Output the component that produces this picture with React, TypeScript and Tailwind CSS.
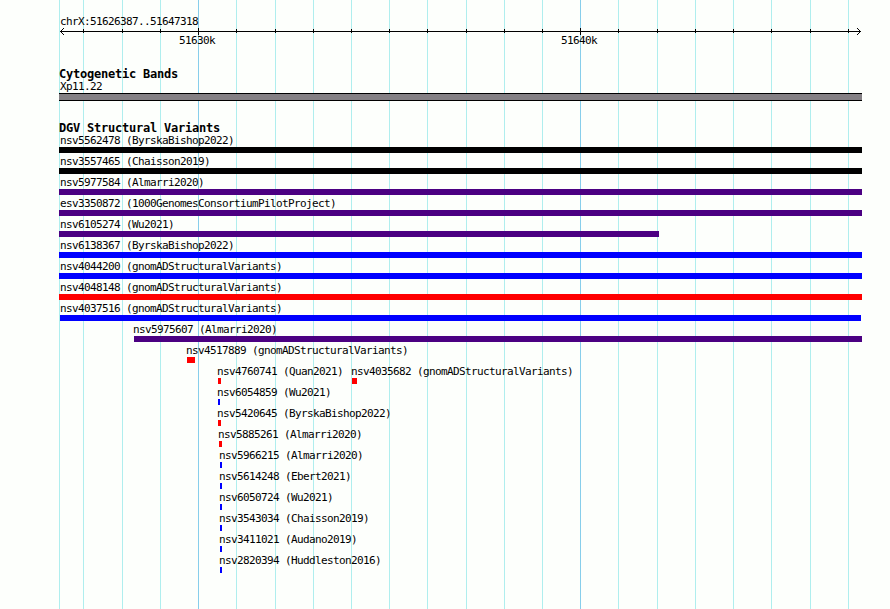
type Feature = {
  name: string;
  start: number;
  end: number;
  color: string;
};

const LEFT = 59;

const gridLines = [
  59, 83, 122, 160, 198, 236, 275, 313, 351, 389, 427, 466, 504, 542, 580, 618, 657, 695, 733, 771,
  810, 848,
];
const majorLines = [198, 580];

const BLACK = "bg-black";
const PURPLE = "bg-[#4b0082]";
const BLUE = "bg-[#0000ff]";
const RED = "bg-[#ff0000]";

const rows: Feature[][] = [
  [{ name: "nsv5562478 (ByrskaBishop2022)", start: 59, end: 862, color: BLACK }],
  [{ name: "nsv3557465 (Chaisson2019)", start: 59, end: 862, color: BLACK }],
  [{ name: "nsv5977584 (Almarri2020)", start: 59, end: 862, color: PURPLE }],
  [{ name: "esv3350872 (1000GenomesConsortiumPilotProject)", start: 59, end: 862, color: PURPLE }],
  [{ name: "nsv6105274 (Wu2021)", start: 59, end: 659, color: PURPLE }],
  [{ name: "nsv6138367 (ByrskaBishop2022)", start: 59, end: 862, color: BLUE }],
  [{ name: "nsv4044200 (gnomADStructuralVariants)", start: 59, end: 862, color: BLUE }],
  [{ name: "nsv4048148 (gnomADStructuralVariants)", start: 59, end: 862, color: RED }],
  [{ name: "nsv4037516 (gnomADStructuralVariants)", start: 60, end: 861, color: BLUE }],
  [{ name: "nsv5975607 (Almarri2020)", start: 134, end: 862, color: PURPLE }],
  [{ name: "nsv4517889 (gnomADStructuralVariants)", start: 187, end: 195, color: RED }],
  [
    { name: "nsv4760741 (Quan2021)", start: 218, end: 221, color: RED },
    { name: "nsv4035682 (gnomADStructuralVariants)", start: 352, end: 357, color: RED },
  ],
  [{ name: "nsv6054859 (Wu2021)", start: 218, end: 220, color: BLUE }],
  [{ name: "nsv5420645 (ByrskaBishop2022)", start: 218, end: 221, color: RED }],
  [{ name: "nsv5885261 (Almarri2020)", start: 219, end: 222, color: RED }],
  [{ name: "nsv5966215 (Almarri2020)", start: 220, end: 222, color: BLUE }],
  [{ name: "nsv5614248 (Ebert2021)", start: 220, end: 222, color: BLUE }],
  [{ name: "nsv6050724 (Wu2021)", start: 220, end: 222, color: BLUE }],
  [{ name: "nsv3543034 (Chaisson2019)", start: 220, end: 222, color: BLUE }],
  [{ name: "nsv3411021 (Audano2019)", start: 220, end: 222, color: BLUE }],
  [{ name: "nsv2820394 (Huddleston2016)", start: 220, end: 222, color: BLUE }],
];

export default function App() {
  return (
    <div className="relative w-[890px] h-[609px] overflow-hidden bg-[#fdfffc] text-black font-['DejaVu_Sans_Mono',monospace] text-[11px] tracking-[-0.622px]">
      <Grid />
      <main className="relative pl-[59px] pt-[14px]">
        <div className="h-[14px] pl-px leading-[15px]">chrX:51626387..51647318</div>
        <Ruler />
        <div className="flex h-[32px] pl-[120px] leading-[11px]">
          <span className="w-[382px]">51630k</span>
          <span>51640k</span>
        </div>

        <TrackTitle>Cytogenetic Bands</TrackTitle>
        <div className="h-[13px] pl-px leading-[14px]">Xp11.22</div>
        <div className="w-[803px] h-2 border-y border-black bg-[#848084]" />

        <div className="pt-5">
          <TrackTitle>DGV Structural Variants</TrackTitle>
        </div>
        <div className="-mt-0.5">
          {rows.map((features) => (
            <FeatureRow key={features[0].name} features={features} />
          ))}
        </div>
      </main>
    </div>
  );
}

function Grid() {
  return (
    <svg className="absolute inset-0" width="890" height="609" shapeRendering="crispEdges">
      {gridLines.map((x) => (
        <rect
          key={x}
          x={x}
          y="0"
          width="1"
          height="609"
          fill={majorLines.includes(x) ? "#87ceeb" : "#afeeee"}
        />
      ))}
    </svg>
  );
}

function Ruler() {
  return (
    <svg className="block" width="803" height="7" shapeRendering="crispEdges">
      <rect x="1" y="3" width="801" height="1" />
      {[1, 2, 3].map((d) => (
        <g key={d}>
          <rect x={1 + d} y={3 - d} width="1" height="1" />
          <rect x={1 + d} y={3 + d} width="1" height="1" />
          <rect x={801 - d} y={3 - d} width="1" height="1" />
          <rect x={801 - d} y={3 + d} width="1" height="1" />
        </g>
      ))}
      {gridLines.slice(1).map((x) => {
        const major = majorLines.includes(x);
        return (
          <rect key={x} x={x - LEFT} y={major ? 0 : 1} width="1" height={major ? 7 : 4} />
        );
      })}
    </svg>
  );
}

function TrackTitle({ children }: { children: string }) {
  return (
    <h2 className="h-[13px] text-[12px] font-bold leading-[14px] tracking-[-0.224px]">{children}</h2>
  );
}

function labelOffset(start: number) {
  if (start === LEFT) return "ml-px";
  return start > 60 ? "-ml-px" : "";
}

function FeatureRow({ features }: { features: Feature[] }) {
  return (
    <div className="flex h-[21px]">
      {features.map((feature, i) => {
        const previousEnd = i === 0 ? LEFT : features[i - 1].end;
        return (
          <div
            key={feature.name}
            className="shrink-0"
            style={{ width: feature.end - feature.start, marginLeft: feature.start - previousEnd }}
          >
            <div className={`h-[15px] leading-[17px] whitespace-nowrap ${labelOffset(feature.start)}`}>
              {feature.name}
            </div>
            <div className={`h-1.5 ${feature.color}`} />
          </div>
        );
      })}
    </div>
  );
}
